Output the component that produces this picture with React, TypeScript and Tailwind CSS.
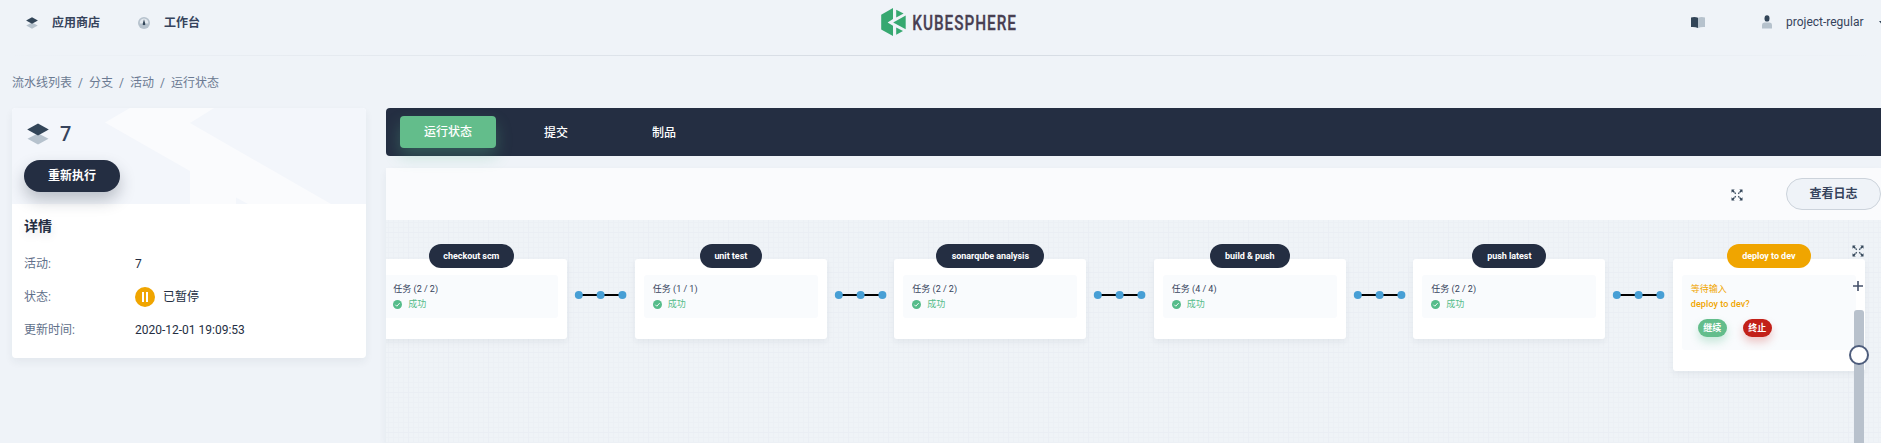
import type { ReactNode } from 'react';

type Stage = { name: string; tasks: string; pill: string };

const stages: Stage[] = [
  { name: 'checkout scm', tasks: '任务 (2 / 2)', pill: 'w-[85px]' },
  { name: 'unit test', tasks: '任务 (1 / 1)', pill: 'w-[62px]' },
  { name: 'sonarqube analysis', tasks: '任务 (2 / 2)', pill: 'w-[108px]' },
  { name: 'build & push', tasks: '任务 (4 / 4)', pill: 'w-[80px]' },
  { name: 'push latest', tasks: '任务 (2 / 2)', pill: 'w-[74px]' },
];

function LayersIcon({ className }: { className: string }) {
  return (
    <svg viewBox="0 0 22 22" className={className}>
      <path d="M11 10.2 21.5 15.8 11 21.4.5 15.8Z" fill="#b6c2cd" />
      <path d="M11 .4 21.8 6.6 11 12.5.2 6.6Z" fill="#324558" />
    </svg>
  );
}

function DashboardIcon() {
  return (
    <svg viewBox="0 0 12 12" className="h-3 w-3">
      <circle cx="6" cy="6" r="6" fill="#b6c2cd" />
      <path d="M1.8 6.6a4.3 4.3 0 1 1 8.4 0Z" fill="#e3e9ef" />
      <path d="M6 2.2 7.2 6.4a1.3 1.3 0 1 1-2.4 0Z" fill="#324558" />
    </svg>
  );
}

function ExpandIcon() {
  return (
    <svg viewBox="0 0 12 12" className="h-3 w-3 shrink-0" fill="#324558" stroke="#324558" strokeWidth="1.3">
      <path d="M1.5 1.5 4.7 4.7M10.5 1.5 7.3 4.7M1.5 10.5 4.7 7.3M10.5 10.5 7.3 7.3" strokeDasharray="2.8 .5" />
      <path d="M.5.5h3.2L.5 3.7ZM11.5.5v3.2L8.3.5ZM.5 11.5V8.3l3.2 3.2ZM11.5 11.5H8.3l3.2-3.2Z" stroke="none" />
    </svg>
  );
}

function Logo() {
  return (
    <svg viewBox="0 0 150 28" className="h-7 w-[150px]">
      <g fill="#36a870">
        <path d="M12 0 .2 6.8v14.6L12 28V17.8L6.6 14.4 12 11.1Z" />
        <path d="M15.2 1.8 22.6 5.6 15.2 9.4Z" />
        <path d="M12.2 14.4 24.7 7.6v13.6Z" />
        <path d="M15.2 19.6 22 23.1l-6.8 3.7Z" />
      </g>
      <text transform="translate(31.3 21.7) scale(.73 1)" textLength="142" lengthAdjust="spacing" fill="#483f52" stroke="#483f52" strokeWidth=".3" fontFamily="Roboto, sans-serif" fontSize="21" fontWeight="500">
        KUBESPHERE
      </text>
    </svg>
  );
}

function Header() {
  return (
    <header className="flex h-14 flex-col">
      <div className="grid h-[55px] grid-cols-[881px_1fr_auto]">
        <nav className="flex h-[45px] items-center pl-[26px] text-xs font-bold text-[#36435c]">
          <LayersIcon className="h-3 w-3" />
          <span className="ml-[14px]">应用商店</span>
          <span className="ml-[38px]"><DashboardIcon /></span>
          <span className="ml-[14px]">工作台</span>
        </nav>
        <div className="pt-2"><Logo /></div>
        <div className="flex h-[45px] items-center text-xs text-[#36435c]">
          <svg viewBox="0 0 14 11" className="h-[11px] w-[14px]">
            <path d="M0 .5Q4-.4 7 .8V11Q4 9.6 0 10Z" fill="#324558" />
            <path d="M14 .5Q10-.4 7 .8V11Q10 9.6 14 10Z" fill="#b6c2cd" />
          </svg>
          <svg viewBox="0 0 10 14" className="ml-[57px] h-[14px] w-[10px] -translate-y-px">
            <path d="M0 13.6V10q0-2 2.2-2.4h5.6Q10 8 10 10v3.6Z" fill="#b6c2cd" />
            <ellipse cx="5" cy="3.4" rx="2.5" ry="3.2" fill="#324558" />
          </svg>
          <span className="ml-[14px] w-[78px] -translate-y-px whitespace-nowrap">project-regular</span>
          <svg viewBox="0 0 2 4" className="ml-[15px] h-1 w-[2px]"><path d="M0 0h2v2.4Z" fill="#324558" /></svg>
        </div>
      </div>
      <div className="h-px bg-linear-to-r from-transparent via-[#d4dae2] to-transparent" />
    </header>
  );
}

function DetailRow({ label, children, className }: { label: string; children: ReactNode; className: string }) {
  return (
    <div className={`flex items-center ${className}`}>
      <dt className="w-[111px] text-[#5f708a]">{label}</dt>
      <dd className="flex items-center text-[#242e42]">{children}</dd>
    </div>
  );
}

function Sidebar() {
  return (
    <aside className="h-[250px] w-[354px] shrink-0 overflow-hidden rounded bg-white">
      <div className="relative h-24 bg-[#f3f6fb] pt-[15px] pl-3">
        <svg viewBox="0 0 354 96" className="absolute inset-0 h-24 w-[354px]">
          <path d="M93 14.5 118 0H202L178 15 319 96H236L224 89.5V96H178V63Z" fill="#fafbfd" />
        </svg>
        <div className="relative flex h-[22px] items-center pl-[3px]">
          <LayersIcon className="h-[22px] w-[22px]" />
          <span className="ml-[11px] text-xl font-medium text-[#36435c]">7</span>
        </div>
        <button className="relative mt-[15px] block h-8 w-24 rounded-full bg-[#242e42] text-xs font-bold text-white shadow-[0_8px_16px_0_rgba(36,46,66,0.28)]">
          重新执行
        </button>
      </div>
      <div className="relative px-3 pt-3">
        <h2 className="h-5 text-sm leading-5 font-bold text-[#242e42] [text-shadow:0_4px_8px_rgba(36,46,66,0.1)]">详情</h2>
        <dl className="text-xs">
          <DetailRow label="活动:" className="mt-[18px] h-5">7</DetailRow>
          <DetailRow label="状态:" className="mt-[13px] h-5">
            <svg viewBox="0 0 20 20" className="h-5 w-5">
              <circle cx="10" cy="10" r="10" fill="#f0a500" />
              <path d="M7 5h2v10H7ZM11 5h2v10h-2Z" fill="#fff" />
            </svg>
            <span className="ml-2">已暂停</span>
          </DetailRow>
          <DetailRow label="更新时间:" className="mt-[13px] h-5">2020-12-01 19:09:53</DetailRow>
        </dl>
      </div>
    </aside>
  );
}

function StageCard({ name, pill, pillColor, height, children }: { name: string; pill: string; pillColor: string; height: string; children: ReactNode }) {
  return (
    <div className={`flex w-48 shrink-0 flex-col rounded-[3px] bg-white px-[9px] shadow-[0_3px_6px_0_rgba(36,46,66,0.06)] ${height}`}>
      <div className={`-mt-[15px] h-6 shrink-0 self-center rounded-full text-center text-[9px] leading-6 font-bold tracking-[-0.05px] whitespace-nowrap text-white ${pill} ${pillColor}`}>
        {name}
      </div>
      {children}
    </div>
  );
}

function Connector() {
  return (
    <svg viewBox="0 0 67.5 8" className="mt-8 h-2 w-[67.5px] shrink-0">
      <path d="M12 4H55.5" stroke="#000" strokeWidth="1.9" />
      <g fill="#479fd5">
        <circle cx="11.8" cy="4" r="4" />
        <circle cx="33.6" cy="4" r="4" />
        <circle cx="55.4" cy="4" r="4" />
      </g>
    </svg>
  );
}

function Pipeline() {
  return (
    <div className="relative h-[223px] overflow-hidden bg-[#eff3f7] bg-[linear-gradient(to_right,#eaeef4_1px,transparent_1px),linear-gradient(to_bottom,#eaeef4_1px,transparent_1px),linear-gradient(to_right,#ecf0f5_1px,transparent_1px),linear-gradient(to_bottom,#ecf0f5_1px,transparent_1px)] bg-size-[40px_40px,40px_40px,5px_5px,5px_5px] bg-position-[22px_12px,22px_12px,2px_2px,2px_2px]">
      <div className="-ml-[10.7px] flex items-start pt-[39px]">
        {stages.map((s) => (
          <div key={s.name} className="flex shrink-0 items-start">
            <StageCard name={s.name} pill={s.pill} pillColor="bg-[#242e42]" height="h-20">
              <div className="mt-[7px] h-[43px] rounded-[3px] bg-[#f9fbfd] pt-[9px] pl-[9px] text-[9px] leading-[15px]">
                <div className="h-[11px] leading-[11px] text-[#36435c]">{s.tasks}</div>
                <div className="mt-[2px] flex items-center text-[#55bc8a]">
                  <svg viewBox="0 0 9 9" className="h-[9px] w-[9px]">
                    <circle cx="4.5" cy="4.5" r="4.5" fill="#55bc8a" />
                    <path d="m2.3 4.7 1.5 1.5 2.9-3.1" fill="none" stroke="#fff" strokeWidth=".9" />
                  </svg>
                  <span className="ml-1.5">成功</span>
                </div>
              </div>
            </StageCard>
            <Connector />
          </div>
        ))}
        <StageCard name="deploy to dev" pill="w-[84px]" pillColor="bg-[#f0a500]" height="h-28">
          <div className="mt-[7px] h-[75px] rounded-[3px] bg-[#f9fbfd] pt-[9px] pl-[9px] text-[9px] text-[#f0a500]">
            <div className="h-[11px] leading-[11px]">等待输入</div>
            <div className="mt-[2px] leading-[15px] font-medium tracking-[0.08px]">deploy to dev?</div>
            <div className="mt-[7px] flex gap-4 pl-[7px] text-center leading-[18px] font-bold text-white">
              <button className="h-[18px] w-[29px] rounded-full bg-[#63bd8b] shadow-[0_5px_9px_rgba(85,188,138,0.3)]">继续</button>
              <button className="h-[18px] w-[29px] rounded-full bg-[#c22018] shadow-[0_5px_9px_rgba(202,38,33,0.25)]">终止</button>
            </div>
          </div>
        </StageCard>
      </div>
      <div className="absolute top-[25px] left-[1462px] flex w-5 flex-col items-center">
        <ExpandIcon />
        <svg viewBox="0 0 10 10" className="mt-6 h-[10px] w-[10px]"><path d="M5 0V10M0 5H10" stroke="#44506a" strokeWidth="1.6" /></svg>
        <div className="relative mt-[19px] ml-px h-[160px] w-[10px] rounded-[3px] bg-[#b8c1cc]">
          <div className="absolute top-[35px] -left-[5px] h-5 w-5 rounded-full border-2 border-[#4e5d7c] bg-white" />
        </div>
      </div>
    </div>
  );
}

export default function App() {
  return (
    <div className="h-[443px] w-[1881px] overflow-hidden bg-[#eff3f8] font-[Roboto,'Noto_Sans_CJK_SC',sans-serif]">
      <Header />
      <div className="flex h-[52px] items-center gap-1.5 pt-px pl-3 text-xs text-[#6b7a92]">
        <span>流水线列表</span><span>/</span><span>分支</span><span>/</span><span>活动</span><span>/</span><span>运行状态</span>
      </div>
      <div className="flex gap-5 pl-3">
        <div className="h-[250px] rounded shadow-[0_4px_8px_0_rgba(36,46,66,0.06)]"><Sidebar /></div>
        <main className="w-[1495px] shrink-0">
          <nav className="flex h-12 items-center rounded-l bg-[#242e42] pl-[14px] text-center text-xs font-medium text-white">
            <span className="h-8 w-24 rounded bg-[#63bd8b] leading-[33px] shadow-[0_8px_16px_0_rgba(85,188,138,0.3)]">运行状态</span>
            <span className="ml-3 w-24 pt-px">提交</span>
            <span className="ml-3 w-24 pt-px">制品</span>
          </nav>
          <section className="mt-3 shadow-[0_4px_8px_0_rgba(36,46,66,0.06)]">
            <div className="flex h-[52px] items-center justify-end bg-[#fafbfd]">
              <span className="pt-0.5"><ExpandIcon /></span>
              <button className="ml-[43px] h-8 w-[95px] shrink-0 rounded-full border border-[#ccd3db] bg-[#eff3f8] text-xs font-bold text-[#36435c]">查看日志</button>
            </div>
            <Pipeline />
          </section>
        </main>
      </div>
    </div>
  );
}
